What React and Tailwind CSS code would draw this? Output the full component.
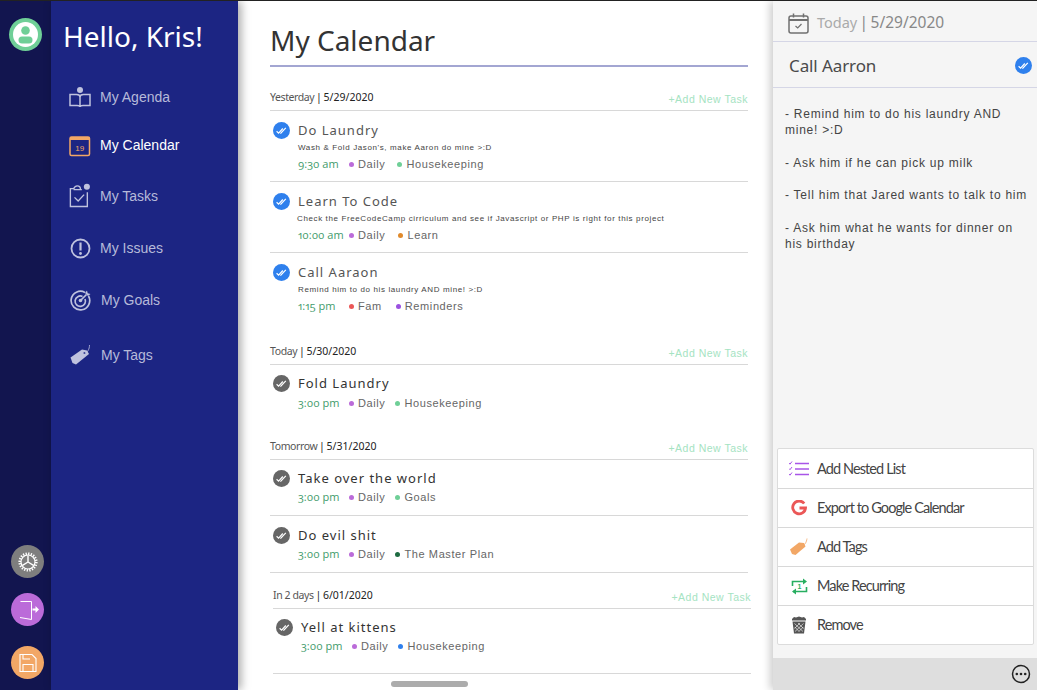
import React from "react";

const sans = "font-['Liberation_Sans',sans-serif]";
const head = "font-['Noto_Sans',sans-serif]";

function DoneBadge({ color = "#2f80ed", size = 17 }) {
  return (
    <svg width={size} height={size} viewBox="0 0 17 17" className="shrink-0">
      <circle cx="8.5" cy="8.5" r="8.5" fill={color} />
      <path d="M3.6 9.2l2 1.9 4.2-4.6M7.4 10.9l.4.3 5-5.3" fill="none" stroke="#fff" strokeWidth="1.2" />
    </svg>
  );
}

function NavIcon({ name }) {
  const s = { fill: "none", stroke: "#bfc2de", strokeWidth: 1.5 };
  if (name === "agenda")
    return (
      <svg width="22" height="22" viewBox="0 0 22 22">
        <circle cx="11" cy="4" r="3" fill="#bfc2de" />
        <path d="M1 8.5h6.5c1.8 0 3.5 1 3.5 2.5 0-1.5 1.7-2.5 3.5-2.5H21v11h-7c-1.5 0-3 .5-3 1.5 0-1-1.5-1.5-3-1.5H1zM11 11v10" {...s} />
      </svg>
    );
  if (name === "calendar")
    return (
      <svg width="22" height="22" viewBox="0 0 22 22">
        <rect x="1" y="2" width="19.5" height="18.5" rx="1.5" fill="none" stroke="#f2a766" strokeWidth="1.5" />
        <rect x="1" y="2" width="19.5" height="3" fill="#f2a766" />
        <text x="10.7" y="16" textAnchor="middle" fontSize="8" fill="#f2a766" fontFamily="Liberation Sans">19</text>
      </svg>
    );
  if (name === "tasks")
    return (
      <svg width="24" height="26" viewBox="0 0 24 26">
        <path d="M6 5H1.5v19.5H20V9M5 5.500c.5-1.500 2-3.500 4-3.500s3.500 1 3.500 3.500M5 6h9" {...s} />
        <path d="M6 14.500l4 4 6.500-7" {...s} />
        <circle cx="19.5" cy="3" r="3.3" fill="#bfc2de" />
      </svg>
    );
  if (name === "issues")
    return (
      <svg width="21" height="21" viewBox="0 0 21 21">
        <circle cx="10.5" cy="10.5" r="9" fill="none" stroke="#bfc2de" strokeWidth="1.8" />
        <path d="M10.5 4.500v8" stroke="#bfc2de" strokeWidth="2.2" />
        <circle cx="10.5" cy="15.5" r="1.4" fill="#bfc2de" />
      </svg>
    );
  if (name === "goals")
    return (
      <svg width="21" height="21" viewBox="0 0 21 21">
        <path d="M15 2.500A9.300 9.300 0 1 0 18.500 6" fill="none" stroke="#bfc2de" strokeWidth="1.7" />
        <path d="M12.500 6.500a5.200 5.200 0 1 0 2.500 2.500" fill="none" stroke="#bfc2de" strokeWidth="1.7" />
        <path d="M10.500 10.500l6-6" stroke="#bfc2de" strokeWidth="1.7" />
        <path d="M15 3l2-2.500.7 2.800 2.800.7L18 6z" fill="#bfc2de" />
        <circle cx="10.5" cy="10.5" r="1.8" fill="#bfc2de" />
      </svg>
    );
  return (
    <svg width="21" height="21" viewBox="0 0 21 21">
      <path d="M.5 12.500L12 4.500l5 1 2 3.500L6 19.500 2.500 18z" fill="#bfc2de" />
      <circle cx="14.5" cy="8" r="1" fill="#1c2583" />
      <path d="M14.500 8c3 0 5-4 5-8" fill="none" stroke="#bfc2de" strokeWidth=".8" />
    </svg>
  );
}

const navItems = [
  { name: "agenda", label: "My Agenda", h: "h-[48px]" },
  { name: "calendar", label: "My Calendar", h: "h-[49px]", active: true },
  { name: "tasks", label: "My Tasks", h: "h-[52px]" },
  { name: "issues", label: "My Issues", h: "h-[52px]" },
  { name: "goals", label: "My Goals", h: "h-[52px]", nudge: true },
  { name: "tags", label: "My Tags", h: "h-[58px]", nudge: true },
];

function Rail() {
  return (
    <div className="w-[51px] shrink-0 bg-[#12154f] flex flex-col items-center justify-between pb-[11px] pt-[17px]">
      <div className="w-[33px] h-[33px] -ml-px rounded-full bg-[#6fcf97] flex items-center justify-center">
        <svg width="27" height="27" viewBox="0 0 27 27">
          <circle cx="13.5" cy="13.5" r="12.5" fill="#fff" />
          <circle cx="13.5" cy="9.5" r="4.3" fill="#6fcf97" />
          <rect x="6.5" y="15.5" width="14" height="7" rx="3.5" fill="#6fcf97" />
        </svg>
      </div>
      <div className="flex flex-col items-center gap-[15px] w-full">
        <div className="w-[33px] h-[33px] ml-[4px] rounded-full bg-[#7e7e7e] flex items-center justify-center">
          <svg width="20" height="20" viewBox="0 0 20 20" fill="none" stroke="#fff">
            <circle cx="10" cy="10" r="8.3" strokeWidth="2.6" strokeDasharray="1.3 1.3" />
            <circle cx="10" cy="10" r="7" strokeWidth="1.2" />
            <path d="M10 10V3.500M10 10l-5.500 3.300M10 10l5.500 3.300" strokeWidth="1.4" />
          </svg>
        </div>
        <div className="w-[33px] h-[33px] ml-[4px] rounded-full bg-[#bb6bd9] flex items-center justify-center">
          <svg width="22" height="22" viewBox="0 0 22 22" fill="none" stroke="#fff">
            <path d="M3.500 2.500H14.500V20.500L3 18.500" strokeWidth="1" />
            <path d="M15.500 9.500h3V7l3.500 3.500-3.500 3.500v-2.500h-3z" fill="#fff" stroke="none" />
          </svg>
        </div>
        <div className="w-[33px] h-[33px] ml-[4px] mt-[5px] rounded-full bg-[#f2a766] flex items-center justify-center">
          <svg width="20" height="20" viewBox="0 0 20 20" fill="none" stroke="#fff" strokeWidth="1.1">
            <path d="M2 1.500h12l4 4v13H2zM5 18.500v-7h10v7M5 1.500v4.500h7" />
          </svg>
        </div>
      </div>
    </div>
  );
}

function Sidebar() {
  return (
    <div className="w-[187px] shrink-0 bg-[#1c2583] shadow-[3px_0_9px_rgba(0,0,0,0.35)] z-10">
      <h1 className={`${head} text-[28px] leading-[38px] text-white pl-[12px] pt-[16px]`}>Hello, Kris!</h1>
      <nav className="mt-[18px] pl-[18px]">
        {navItems.map((item) => (
          <div key={item.name} className={`${item.h} flex items-center`}>
            <div className="w-[22px] flex justify-center shrink-0">
              <NavIcon name={item.name} />
            </div>
            <span
              className={`${sans} text-[14px] ml-[9px] ${item.nudge ? "pl-px" : ""} ${item.active ? "text-white" : "text-[#b6bad9]"}`}
            >
              {item.label}
            </span>
          </div>
        ))}
      </nav>
    </div>
  );
}

function Task({ title, desc, time, tags, done, h, border = true, descShift, pad = "pt-[9px]", metaGap = "mt-px" }) {
  return (
    <div className={`${h} ${border ? "border-b border-[#d8d8d8]" : ""} ${pad}`}>
      <div className="flex items-center pl-[3px] h-[19px]">
        <DoneBadge color={done ? "#2f80ed" : "#666666"} />
        <span className={`${head} text-[13px] tracking-[1px] ml-[8px] ${done ? "text-[#555]" : "text-[#333]"}`}>{title}</span>
      </div>
      {desc && (
        <div className={`${sans} text-[8px] tracking-[0.62px] text-[#444] leading-[15px] ${descShift ? "pl-[27px]" : "pl-[28px]"}`}>
          {desc}
        </div>
      )}
      <div className={`flex items-center pl-[28px] h-[17px] ${metaGap}`}>
        <span className="w-[51px] shrink-0 font-['Open_Sans',sans-serif] oldstyle-nums proportional-nums text-[11px] text-[#3f9b6b]">{time}</span>
        {tags.map((t) => (
          <span key={t.label} className="flex items-center" style={{ marginLeft: t.gap }}>
            <span className="w-[5px] h-[5px] rounded-full" style={{ backgroundColor: t.color }} />
            <span className={`${sans} text-[11px] tracking-[0.6px] text-[#666] ml-[4px]`}>{t.label}</span>
          </span>
        ))}
      </div>
    </div>
  );
}

function SectionHeader({ when, date }) {
  return (
    <div className="h-[26px] border-b border-[#d8d8d8] flex justify-between">
      <span className={`${head} text-[10.5px] leading-[24px] text-[#555] [word-spacing:-1px]`}>
        <span className="tracking-[-0.4px] [word-spacing:normal]">{when}</span> <span className="text-[#222]">| {date}</span>
      </span>
      <span className={`${sans} text-[10.5px] tracking-[0.5px] leading-[28px] text-[#a5e3c2]`}>+Add New Task</span>
    </div>
  );
}

const purple = "#bb6bd9";
const green = "#6fcf97";

function Main() {
  return (
    <main className="relative flex-1 bg-white overflow-hidden pl-[32px] pr-[25px]">
      <h2 className={`${head} text-[28px] leading-[38px] text-[#333] pt-[20px] h-[64px]`}>My Calendar</h2>
      <div className="h-[2px] bg-[#a3a6d2]" />
      <div className="mt-[18px]">
        <SectionHeader when="Yesterday" date="5/29/2020" />
        <Task
          done
          h="h-[71px]"
          pad="pt-[10px]"
          title="Do Laundry"
          desc="Wash & Fold Jason's, make Aaron do mine >:D"
          time="9:30 am"
          tags={[
            { label: "Daily", color: purple, gap: 0 },
            { label: "Housekeeping", color: green, gap: 12 },
          ]}
        />
        <Task
          done
          h="h-[71px]"
          pad="pt-[10px]"
          title="Learn To Code"
          desc="Check the FreeCodeCamp cirriculum and see if Javascript or PHP is right for this project"
          descShift
          time="10:00 am"
          tags={[
            { label: "Daily", color: purple, gap: 0 },
            { label: "Learn", color: "#e08a2c", gap: 13 },
          ]}
        />
        <Task
          done
          h="h-[71px]"
          pad="pt-[10px]"
          border={false}
          title="Call Aaraon"
          desc="Remind him to do his laundry AND mine! >:D"
          time="1:15 pm"
          tags={[
            { label: "Fam", color: "#eb5757", gap: 0 },
            { label: "Reminders", color: "#9b51e0", gap: 14 },
          ]}
        />
      </div>
      <div className="mt-[15px]">
        <SectionHeader when="Today" date="5/30/2020" />
        <Task
          h="h-[56px]"
          border={false}
          metaGap="mt-[2px]"
          title="Fold Laundry"
          time="3:00 pm"
          tags={[
            { label: "Daily", color: purple, gap: 0 },
            { label: "Housekeeping", color: green, gap: 10 },
          ]}
        />
      </div>
      <div className="mt-[13px]">
        <SectionHeader when="Tomorrow" date="5/31/2020" />
        <Task
          h="h-[56px]"
          title="Take over the world"
          time="3:00 pm"
          tags={[
            { label: "Daily", color: purple, gap: 0 },
            { label: "Goals", color: green, gap: 10 },
          ]}
        />
        <Task
          h="h-[57px]"
          pad="pt-[10px]"
          title="Do evil shit"
          time="3:00 pm"
          tags={[
            { label: "Daily", color: purple, gap: 0 },
            { label: "The Master Plan", color: "#1e6b41", gap: 10 },
          ]}
        />
      </div>
      <div className="mt-[10px] ml-[3px] -mr-[3px]">
        <SectionHeader when="In 2 days" date="6/01/2020" />
        <Task
          h="h-[65px]"
          title="Yell at kittens"
          time="3:00 pm"
          tags={[
            { label: "Daily", color: purple, gap: 0 },
            { label: "Housekeeping", color: "#2f80ed", gap: 10 },
          ]}
        />
      </div>
      <div className="absolute left-[153px] bottom-[3px] w-[77px] h-[6px] rounded-full bg-[#acacac]" />
    </main>
  );
}

function ActionIcon({ name }) {
  if (name === "list")
    return (
      <svg width="20" height="16" viewBox="0 0 20 16" fill="none">
        <path d="M6 2.500h14M6 8h14M6 13.500h14" stroke="#a855e8" strokeWidth="1.3" />
        <path d="M0 2l1 1.200L3 .5M0 7.500l1 1.200L3 6M0 13l1 1.200 2-2.700" stroke="#a855e8" strokeWidth="1" />
      </svg>
    );
  if (name === "google")
    return (
      <svg width="16" height="16" viewBox="0 0 16 16" fill="none">
        <path d="M13.200 3.500A6.400 6.400 0 1 0 14.500 8H8.500" stroke="#eb5757" strokeWidth="2.8" />
      </svg>
    );
  if (name === "tag")
    return (
      <svg width="18" height="18" viewBox="0 0 18 18">
        <path d="M0 11.500L9 4.500l5 .5 1.500 3.500L5.500 17 2 16z" fill="#f2a766" />
        <path d="M13 7c2 0 3.500-3 4-6.500" fill="none" stroke="#f2a766" strokeWidth=".8" />
      </svg>
    );
  if (name === "repeat")
    return (
      <svg width="17" height="17" viewBox="0 0 17 17" fill="none" stroke="#27ae60" strokeWidth="1.6">
        <path d="M1.500 8V3.500H13M13 13.500H2M15.500 9v4.500H12" />
        <path d="M12 .5l4 3-4 3zM5 10.500l-4 3 4 3z" fill="#27ae60" stroke="none" />
        <text x="8.5" y="11" textAnchor="middle" fontSize="7" fill="#27ae60" stroke="none" fontFamily="Liberation Sans" fontWeight="700">1</text>
      </svg>
    );
  return (
    <svg width="16" height="18" viewBox="0 0 16 18" fill="#555">
      <path d="M1 3l2-2 2 .5L8 .5l3 1 2-.5 2 2v1.500H1z" />
      <path d="M1.500 5.500h13L13 17.500H3z" />
      <path d="M3.500 7.500l8.500 8M7 7l5.500 5.500M3.700 11l4.500 4.500M12.500 7.500L4 15.500M9 7l-5.500 5.500M12.300 11l-4.500 4.500" stroke="#fff" strokeWidth=".6" />
    </svg>
  );
}

const actions = [
  { name: "list", label: "Add Nested List" },
  { name: "google", label: "Export to Google Calendar" },
  { name: "tag", label: "Add Tags" },
  { name: "repeat", label: "Make Recurring" },
  { name: "trash", label: "Remove" },
];

function Detail() {
  return (
    <aside className="w-[264px] shrink-0 bg-[#f5f5f5] flex flex-col shadow-[-3px_0_8px_rgba(0,0,0,0.2)] z-10">
      <div className="h-[41px] border-b border-[#d5d6e6] flex items-center pl-[15px] pt-[4px] shrink-0">
        <svg width="21" height="21" viewBox="0 0 21 21" fill="none" stroke="#707070" strokeWidth="1.5">
          <rect x="1" y="3" width="19" height="17" rx="2" />
          <path d="M1 7h19" strokeWidth="2" />
          <path d="M5.500.5v4M15.500.5v4" />
          <path d="M7.500 13l2.200 2 3.800-4" strokeWidth="1.2" />
        </svg>
        <span className={`${head} text-[14.5px] ml-[8px] text-[#aaa] [word-spacing:-1.5px]`}>
          Today <span className="text-[15.5px] text-[#888]">| 5/29/2020</span>
        </span>
      </div>
      <div className="h-[46px] border-b border-[#d5d6e6] flex items-center justify-between pl-[16px] pr-[5px] pt-[2px] shrink-0">
        <span className={`${head} text-[17px] tracking-[-0.1px] text-[#4a4a4a]`}>Call Aarron</span>
        <DoneBadge />
      </div>
      <div className={`${sans} text-[12px] leading-[16px] tracking-[0.75px] text-[#444] pl-[12px] pr-[7px] pt-[18px] flex flex-col gap-[16.5px]`}>
        <p>- Remind him to do his laundry AND mine! &gt;:D</p>
        <p>- Ask him if he can pick up milk</p>
        <p>- Tell him that Jared wants to talk to him</p>
        <p>- Ask him what he wants for dinner on his birthday</p>
      </div>
      <div className="mt-auto ml-[4px] mr-[3px] mb-[13px] bg-white border border-[#dcdcdc] rounded-[2px]">
        {actions.map((a, i) => (
          <div
            key={a.name}
            className={`h-[39px] flex items-center ${i > 0 ? "border-t border-[#d8d8d8]" : ""}`}
          >
            <div className="w-[39px] flex justify-center shrink-0 pl-[3px]">
              <ActionIcon name={a.name} />
            </div>
            <span className="font-['Lato',sans-serif] text-[14.5px] tracking-[-0.9px] text-[#444]">{a.label}</span>
          </div>
        ))}
      </div>
      <div className="h-[32px] bg-[#dedede] flex items-center justify-end pr-[6px] shrink-0">
        <svg width="20" height="20" viewBox="0 0 20 20">
          <circle cx="10" cy="10" r="8.5" fill="none" stroke="#222" strokeWidth="1.5" />
          <circle cx="5.8" cy="10" r="1.3" fill="#222" />
          <circle cx="10" cy="10" r="1.3" fill="#222" />
          <circle cx="14.2" cy="10" r="1.3" fill="#222" />
        </svg>
      </div>
    </aside>
  );
}

export default function App() {
  return (
    <div className="w-[1037px] h-[690px] flex border-t border-[#222] overflow-hidden">
      <Rail />
      <Sidebar />
      <Main />
      <Detail />
    </div>
  );
}
